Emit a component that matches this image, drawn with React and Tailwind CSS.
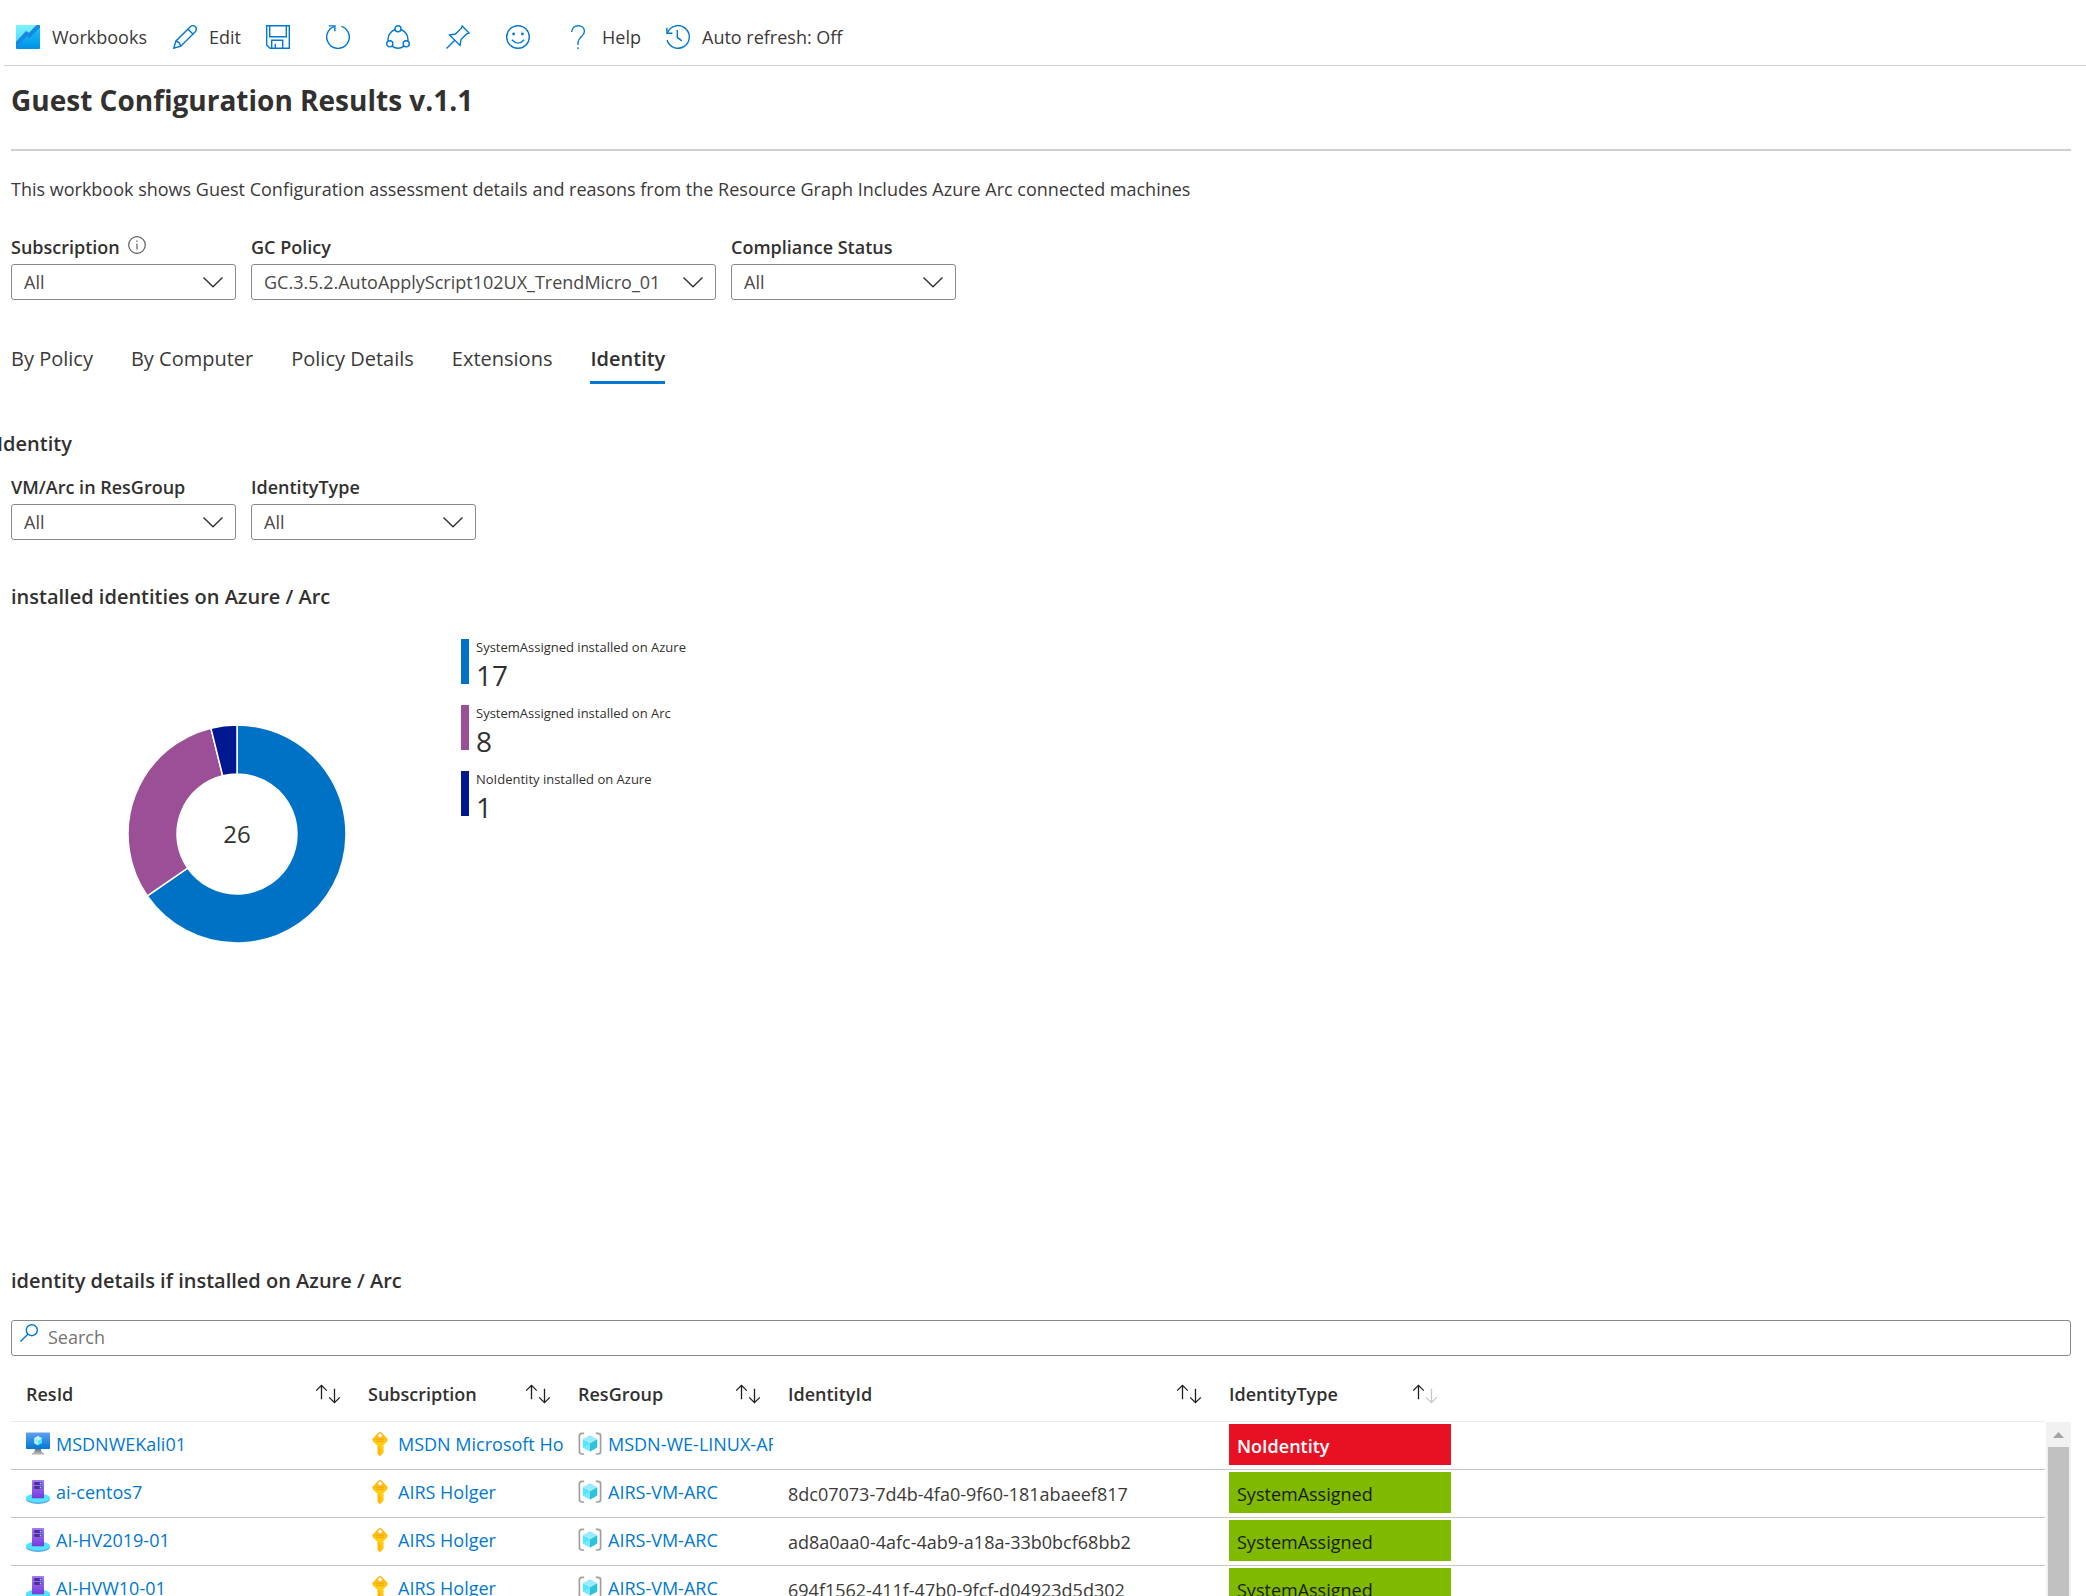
import React from "react";

const TEXT = "text-[18px] leading-6";

function Stroke({ size = 24, children }) {
  return (
    <svg
      width={size}
      height={size}
      viewBox={`0 0 ${size} ${size}`}
      fill="none"
      stroke="#0078d4"
      strokeWidth="1.4"
      className="shrink-0"
      aria-hidden="true"
    >
      {children}
    </svg>
  );
}

const WorkbookIcon = () => (
  <svg width="24" height="24" viewBox="0 0 24 24" className="shrink-0" aria-hidden="true">
    <defs>
      <linearGradient id="wbTop" x1="0" y1="0" x2="0" y2="1">
        <stop offset="0" stopColor="#7df3ff" />
        <stop offset="1" stopColor="#4fdcf8" />
      </linearGradient>
      <linearGradient id="wbLow" x1="0" y1="0" x2="0" y2="1">
        <stop offset="0" stopColor="#1cc8f8" />
        <stop offset="1" stopColor="#0092e4" />
      </linearGradient>
    </defs>
    <rect width="24" height="24" rx="1" fill="url(#wbLow)" />
    <path d="M1 0H21L13 8 10 6.5 0 17V1Q0 0 1 0Z" fill="url(#wbTop)" />
    <path d="M0 17 10 6 13 8 20.5 0H23Q24 0 24 1V2.5L13.5 13 11 11 0 22.5Z" fill="#1a86e3" />
  </svg>
);

const PencilIcon = () => (
  <Stroke>
    <path d="M.8 23.2 2.8 16.2 17.3 1.7A3.3 3.3 0 0 1 22.3 6.7L7.8 21.2Z" />
    <path d="M2.8 16.2Q7 17 7.8 21.2M14.9 4.1 19.9 9.1" />
  </Stroke>
);
const SaveIcon = () => (
  <Stroke>
    <path d="M.7.7H23.3V23.3H4L.7 20Z" />
    <path d="M3.7.7V11.7H20.3V.7M5.7 23.3V15.3H16.7V23.3M9.3 23V18.7" />
  </Stroke>
);
const RefreshIcon = () => (
  <Stroke>
    <path d="M8.6 1.3A11.3 11.3 0 1 0 15.4 1.3" />
    <path d="M2.7.9H8.9V6.3" />
  </Stroke>
);
const ShareIcon = () => (
  <Stroke>
    <circle cx="12" cy="3.7" r="3" />
    <circle cx="3.8" cy="18.8" r="3.1" />
    <circle cx="20.2" cy="18.8" r="3.1" />
    <path d="M9 4.5A10.6 10.6 0 0 0 2.2 16.2M15 4.5A10.6 10.6 0 0 1 21.8 16.2M6 21.2A10.6 10.6 0 0 0 18 21.2" />
  </Stroke>
);
const PinIcon = () => (
  <Stroke>
    <path d="M16.2 1 23.1 8.1 20.6 8.9 15 14.6 14 20.4 3.6 10 9.4 9 15.2 3.4Z" />
    <path d="M8.8 15.2.5 23.5" />
  </Stroke>
);
const SmileIcon = () => (
  <Stroke>
    <circle cx="12" cy="12" r="11.3" />
    <circle cx="7.6" cy="9" r="1.4" fill="#0078d4" stroke="none" />
    <circle cx="16.4" cy="9" r="1.4" fill="#0078d4" stroke="none" />
    <path d="M5.8 14.8Q12 21.4 18.2 14.8" />
  </Stroke>
);
const QuestionIcon = () => (
  <Stroke>
    <path d="M5.8 7C5.8 3.2 8.4.7 12.2.7 15.9.7 18.4 3.1 18.4 6.4 18.4 11.6 12 12 12 17.6V20" />
    <path d="M12 22.3V24" />
  </Stroke>
);
const HistoryIcon = () => (
  <Stroke>
    <path d="M1.4 8A11.3 11.3 0 1 1 1.1 15" />
    <path d="M.9 2.8V8.3H6.4M11.3 5V12.3L15.8 15.9" />
  </Stroke>
);

const VmIcon = () => (
  <svg width="24" height="24" viewBox="0 0 24 24" className="shrink-0" aria-hidden="true">
    <defs>
      <linearGradient id="vmScreen" x1="0" y1="0" x2="0" y2="1">
        <stop offset="0" stopColor="#5ea0ef" />
        <stop offset="1" stopColor="#0078d4" />
      </linearGradient>
      <linearGradient id="vmStand" x1="0" y1="0" x2="0" y2="1">
        <stop offset="0" stopColor="#707070" />
        <stop offset="1" stopColor="#c8c8c8" />
      </linearGradient>
    </defs>
    <path d="M9 17H15Q15 20.5 18 21.5V22.8H6V21.5Q9 20.5 9 17Z" fill="url(#vmStand)" />
    <rect y="0.5" width="24" height="16.5" rx="0.8" fill="url(#vmScreen)" />
    <path d="M12 4 16 6.3V11L12 13.3 8 11V6.3Z" fill="#50e6ff" />
    <path d="M12 4 16 6.3 12 8.7 8 6.3Z" fill="#c3f1ff" />
    <path d="M12 8.7 8 11V6.3Z" fill="#9cebff" />
    <path d="M12 8.7V13.3L8 11Z" fill="#c3f1ff" />
  </svg>
);

const ServerIcon = () => (
  <svg width="24" height="24" viewBox="0 0 24 24" className="shrink-0" aria-hidden="true">
    <defs>
      <linearGradient id="srvBody" x1="0" y1="0" x2="0" y2="1">
        <stop offset="0" stopColor="#a67af4" />
        <stop offset="1" stopColor="#773adc" />
      </linearGradient>
    </defs>
    <ellipse cx="12" cy="19" rx="12" ry="5" fill="#5ea0ef" />
    <ellipse cx="12" cy="18" rx="12" ry="4.6" fill="#50e6ff" />
    <rect x="6" y="0" width="12" height="18.3" rx="0.6" fill="url(#srvBody)" />
    <rect x="7.8" y="2" width="8.4" height="3" rx="1.4" fill="#552f99" />
    <rect x="7.8" y="6" width="8.4" height="3" rx="1.4" fill="#552f99" />
    <circle cx="14.6" cy="3.5" r="0.9" fill="#50e6ff" />
    <circle cx="14.6" cy="7.5" r="0.9" fill="#50e6ff" />
  </svg>
);

const KeyIcon = () => (
  <svg width="24" height="24" viewBox="0 0 24 24" className="shrink-0" aria-hidden="true">
    <defs>
      <linearGradient id="keyBody" x1="0" y1="0" x2="0" y2="1">
        <stop offset="0" stopColor="#feb01b" />
        <stop offset="0.5" stopColor="#ffcf12" />
        <stop offset="1" stopColor="#ffbd0d" />
      </linearGradient>
    </defs>
    <path
      d="M12 0Q13 0 13.8.8L19 6.2Q20.4 7.8 19 9.4L15.2 13.6V14.6L16 15.4 15.2 16.3 16 17.3 15.2 18.2 16 19.4 15.2 20.4V21L12.6 23.7Q12 24.2 11.4 23.7L9.4 21.5V13.6L5 9.4Q3.6 7.8 5 6.2L10.2.8Q11 0 12 0Z"
      fill="url(#keyBody)"
    />
    <circle cx="12" cy="3.4" r="1.8" fill="#fff" />
    <path d="M8 7.3H16M8 9.3H16M11.3 14.5V21.5" stroke="#f7a50c" strokeWidth="1" />
  </svg>
);

const GroupIcon = () => (
  <svg width="24" height="24" viewBox="0 0 24 24" className="shrink-0" aria-hidden="true">
    <path
      d="M6.2 1.4H4.2Q1.4 1.4 1.4 3.8V19.6Q1.4 22 4.2 22H6.2M17.8 1.4H19.8Q22.6 1.4 22.6 3.8V19.6Q22.6 22 19.8 22H17.8"
      fill="none"
      stroke="#a0a0a0"
      strokeWidth="1.7"
    />
    <path d="M12 3.6 19.2 7.6V15.4L12 19.6 4.8 15.4V7.6Z" fill="#50e6ff" />
    <path d="M12 3.6 19.2 7.6 12 11.6 4.8 7.6Z" fill="#9cebff" />
    <path d="M19.2 7.6V15.4L12 11.6Z" fill="#32bedd" />
    <path d="M12 11.6 19.2 15.4 12 19.6Z" fill="#32bedd" />
    <path d="M12 11.6V19.6L4.8 15.4Z" fill="#9cebff" opacity="0.5" />
  </svg>
);

const SortIcon = ({ down = "#201f1e" }) => (
  <svg width="26" height="20" viewBox="0 0 26 20" fill="none" strokeWidth="1.3" aria-hidden="true">
    <path d="M6.5 15.3V1.3M1.2 6.6 6.5 1.3 11.8 6.6" stroke="#201f1e" />
    <path d="M19.5 4.7V18.7M14.2 13.4 19.5 18.7 24.8 13.4" stroke={down} />
  </svg>
);

const toolbar = [
  { name: "Workbooks", label: "Workbooks", icon: WorkbookIcon, width: "min-w-[97px]" },
  { name: "Edit", label: "Edit", icon: PencilIcon, width: "min-w-[33px]" },
  { name: "Save", icon: SaveIcon },
  { name: "Refresh", icon: RefreshIcon },
  { name: "Share", icon: ShareIcon },
  { name: "Pin", icon: PinIcon },
  { name: "Feedback", icon: SmileIcon },
  { name: "Help", label: "Help", icon: QuestionIcon, width: "min-w-[40px]" },
  { name: "Auto refresh", label: "Auto refresh: Off", icon: HistoryIcon },
];

function Picker({ id, label, value, info, wide }) {
  return (
    <div className={wide ? "w-[465px]" : "w-[225px]"}>
      <div className="flex h-7 items-center gap-2">
        <label htmlFor={id} className={`${TEXT} font-semibold text-[#323130]`}>
          {label}
        </label>
        {info && (
          <svg width="18" height="18" viewBox="0 0 18 18" fill="none" stroke="#605e5c" aria-hidden="true" className="mb-1">
            <circle cx="9" cy="9" r="8.3" strokeWidth="1.2" />
            <path d="M9 7.4V13.4M9 4.5V6" strokeWidth="1.2" />
          </svg>
        )}
      </div>
      <div className="relative mt-[3px]">
        <select
          id={id}
          className="h-9 w-full appearance-none rounded-[3px] border border-[#8a8886] bg-white pr-10 pl-3 text-[18px] leading-6 text-[#4a4948]"
        >
          <option>{value}</option>
        </select>
        <svg
          width="20"
          height="11"
          viewBox="0 0 20 11"
          fill="none"
          stroke="#323130"
          strokeWidth="1.4"
          className="pointer-events-none absolute top-[13px] right-[13px]"
          aria-hidden="true"
        >
          <path d="M.5.5 10 9.7 19.5.5" />
        </svg>
      </div>
    </div>
  );
}

const tabs = ["By Policy", "By Computer", "Policy Details", "Extensions", "Identity"];

const slices = [
  { label: "SystemAssigned installed on Azure", value: 17, fill: "#0072c6", bar: "bg-[#0072c6]" },
  { label: "SystemAssigned installed on Arc", value: 8, fill: "#9b4f96", bar: "bg-[#9b4f96]" },
  { label: "NoIdentity installed on Azure", value: 1, fill: "#00188f", bar: "bg-[#00188f]" },
];
const total = slices.reduce((sum, s) => sum + s.value, 0);

function Donut() {
  const outer = 109;
  const inner = 60;
  const at = (r, turn) =>
    `${111 + r * Math.sin(turn * 2 * Math.PI)} ${110 - r * Math.cos(turn * 2 * Math.PI)}`;
  let from = 0;
  return (
    <svg width="220" height="220" viewBox="0 0 220 220" role="img" aria-label="Installed identities">
      {slices.map((s) => {
        const start = from / total;
        from += s.value;
        const end = from / total;
        const big = end - start > 0.5 ? 1 : 0;
        return (
          <path
            key={s.label}
            d={`M${at(outer, start)}A${outer} ${outer} 0 ${big} 1 ${at(outer, end)}L${at(inner, end)}A${inner} ${inner} 0 ${big} 0 ${at(inner, start)}Z`}
            fill={s.fill}
            stroke="#fff"
            strokeWidth="1.5"
          />
        );
      })}
      <text x="111" y="119" textAnchor="middle" fontSize="24" fill="#323130">
        {total}
      </text>
    </svg>
  );
}

const rows = [
  { vm: true, res: "MSDNWEKali01", sub: "MSDN Microsoft Holger", group: "MSDN-WE-LINUX-ARC", id: "", type: "NoIdentity" },
  { res: "ai-centos7", sub: "AIRS Holger", group: "AIRS-VM-ARC", id: "8dc07073-7d4b-4fa0-9f60-181abaeef817", type: "SystemAssigned" },
  { res: "AI-HV2019-01", sub: "AIRS Holger", group: "AIRS-VM-ARC", id: "ad8a0aa0-4afc-4ab9-a18a-33b0bcf68bb2", type: "SystemAssigned" },
  { res: "AI-HVW10-01", sub: "AIRS Holger", group: "AIRS-VM-ARC", id: "694f1562-411f-47b0-9fcf-d04923d5d302", type: "SystemAssigned" },
];

const columns = [
  { name: "ResId", pad: "pr-3" },
  { name: "Subscription", pad: "pr-3" },
  { name: "ResGroup", pad: "pr-3" },
  { name: "IdentityId", pad: "pr-3" },
  { name: "IdentityType", pad: "pr-4", down: "#c8c6c4" },
];

function LinkCell({ icon: Icon, text }) {
  return (
    <td className="overflow-hidden p-0 pl-[15px]">
      <div className="flex h-[47px] items-center gap-1.5 overflow-hidden pb-0.5">
        <Icon />
        <a href="#" className={`${TEXT} whitespace-nowrap text-[#0078d4]`}>
          {text}
        </a>
      </div>
    </td>
  );
}

export default function App() {
  return (
    <div className="flex h-screen flex-col overflow-hidden bg-white font-['Open_Sans',sans-serif] text-[#323130]">
      <header className="ml-1 flex h-[66px] shrink-0 items-center border-b border-[#d2d0ce] pt-[9px]">
        {toolbar.map(({ name, label, icon: Icon, width = "" }) => (
          <button key={name} type="button" aria-label={name} className="flex items-center gap-3 px-3 text-left">
            <Icon />
            <span className={`${TEXT} ${width} text-[#3b3a39]`}>{label}</span>
          </button>
        ))}
      </header>

      <main className="flex min-h-0 flex-1 flex-col pr-[15px] pl-[11px]">
        <h1 className="mt-4 text-[28px] leading-9 font-bold">Guest Configuration Results v.1.1</h1>
        <hr className="mt-[31px] border-t-2 border-[#d2d0ce]" />
        <p className={`${TEXT} mt-[26px] text-[#3b3a39]`}>
          This workbook shows Guest Configuration assessment details and reasons from the Resource Graph Includes Azure
          Arc connected machines
        </p>

        <div className="mt-8 flex gap-[15px]">
          <Picker id="subscription" label="Subscription" value="All" info />
          <Picker id="policy" label="GC Policy" value="GC.3.5.2.AutoApplyScript102UX_TrendMicro_01" wide />
          <Picker id="status" label="Compliance Status" value="All" />
        </div>

        <nav role="tablist" className="mt-10 flex gap-[38px]">
          {tabs.map((t) => {
            const on = t === "Identity";
            return (
              <button
                key={t}
                type="button"
                role="tab"
                aria-selected={on}
                className={
                  on
                    ? "h-11 border-b-3 border-[#0078d4] pb-1 text-[20px] leading-6 font-semibold"
                    : "h-11 border-b-3 border-transparent pb-1 text-[20px] leading-6 text-[#3b3a39]"
                }
              >
                {t}
              </button>
            );
          })}
        </nav>

        <h2 className="mt-12 -ml-[14px] text-[20px] leading-6 font-semibold">Identity</h2>

        <div className="mt-[17px] flex gap-[15px]">
          <Picker id="resgroup" label="VM/Arc in ResGroup" value="All" />
          <Picker id="idtype" label="IdentityType" value="All" />
        </div>

        <h2 className="mt-[45px] text-[20px] leading-6 font-semibold">installed identities on Azure / Arc</h2>

        <section className="mt-[30px] flex h-[630px] shrink-0">
          <div className="flex w-[450px] flex-col items-center pt-[85px]">
            <Donut />
          </div>
          <ul className="flex flex-col gap-[21px]">
            {slices.map((s) => (
              <li key={s.label} className="flex h-[45px] gap-[7px]">
                <span className={`w-2 ${s.bar}`} />
                <span>
                  <span className="block text-[13px] leading-4">{s.label}</span>
                  <span className="mt-0.5 block text-[28px] leading-9">{s.value}</span>
                </span>
              </li>
            ))}
          </ul>
        </section>

        <h2 className="text-[20px] leading-6 font-semibold">identity details if installed on Azure / Arc</h2>

        <div className="mt-[27px] flex h-9 shrink-0 rounded-[3px] border border-[#8a8886] pt-[3px] pl-2">
          <Stroke size={18}>
            <circle cx="11.8" cy="6.2" r="5.5" />
            <path d="M7.8 10.2.5 17.5" />
          </Stroke>
          <input
            type="text"
            aria-label="Search"
            placeholder="Search"
            className="ml-[10px] h-[26px] flex-1 text-[18px] leading-6 outline-none placeholder:text-[#767472]"
          />
        </div>

        <div className="mt-3 flex min-h-0 flex-1">
          <div className="min-w-0 flex-1 overflow-hidden">
            <table className="w-full table-fixed border-collapse text-left">
              <colgroup>
                <col className="w-[342px]" />
                <col className="w-[210px]" />
                <col className="w-[210px]" />
                <col className="w-[441px]" />
                <col className="w-[240px]" />
                <col />
              </colgroup>
              <thead>
                <tr className="h-[53px] border-b border-[#edebe9]">
                  {columns.map((c) => (
                    <th key={c.name} className={`py-0 pl-[15px] ${c.pad}`}>
                      <div className="flex items-center justify-between">
                        <span className={`${TEXT} font-semibold`}>{c.name}</span>
                        <button type="button" aria-label={`Sort by ${c.name}`}>
                          <SortIcon down={c.down} />
                        </button>
                      </div>
                    </th>
                  ))}
                  <th />
                </tr>
              </thead>
              <tbody>
                {rows.map((r) => (
                  <tr key={r.res} className="h-12 border-b border-[#c8c6c4]">
                    <LinkCell icon={r.vm ? VmIcon : ServerIcon} text={r.res} />
                    <LinkCell icon={KeyIcon} text={r.sub} />
                    <LinkCell icon={GroupIcon} text={r.group} />
                    <td className={`${TEXT} p-0 pt-0.5 pl-[15px] text-[#3b3a39]`}>{r.id}</td>
                    <td className="p-0 pr-[3px] pb-0.5 pl-[15px]">
                      <div
                        className={
                          r.type === "NoIdentity"
                            ? "flex h-[41px] items-center bg-[#e81123] pt-1 pl-2 text-[18px] leading-6 font-semibold text-white"
                            : "flex h-[41px] items-center bg-[#7fba00] pt-1 pl-2 text-[18px] leading-6 text-[#1b1a19]"
                        }
                      >
                        {r.type}
                      </div>
                    </td>
                    <td />
                  </tr>
                ))}
              </tbody>
            </table>
          </div>
          <div className="mt-[54px] ml-px flex w-[25px] flex-col bg-[#f1f1f1]">
            <div className="flex h-[25px] shrink-0 items-center justify-center">
              <svg width="11" height="6" viewBox="0 0 11 6" fill="#a3a3a3" aria-hidden="true">
                <path d="M5.5 0 11 6H0Z" />
              </svg>
            </div>
            <div className="mx-0.5 flex-1 bg-[#c1c1c1]" />
          </div>
        </div>
      </main>
    </div>
  );
}
